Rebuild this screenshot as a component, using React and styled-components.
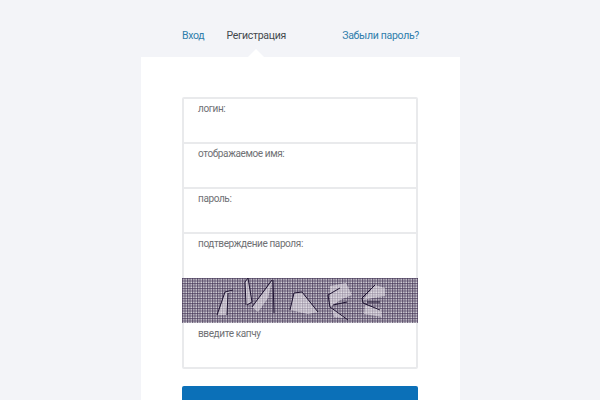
import React from 'react';
import styled, { createGlobalStyle } from 'styled-components';

const GlobalStyle = createGlobalStyle`
  html, body {
    margin: 0;
    height: 400px;
    overflow: hidden;
    background: #f3f4f8;
    font-family: Roboto, "Open Sans", sans-serif;
  }
`;

const Page = styled.div`
  width: 320px;
  margin: 0 0 0 141px;
  display: flex;
  flex-flow: column nowrap;
`;

const Nav = styled.nav`
  display: flex;
  align-items: flex-end;
  height: 57px;
  padding: 0 42px 14px 41px;
  box-sizing: border-box;
  font-size: 10.5px;
  letter-spacing: -0.3px;
  line-height: 14px;
`;

const Tab = styled.a`
  position: relative;
  display: block;
  margin-right: 22px;
  color: ${p => (p.$active ? '#43484d' : '#2f7dab')};

  ${p =>
    p.$active &&
    `&::after {
      content: '';
      position: absolute;
      left: 22px;
      top: 20px;
      border: 8px solid transparent;
      border-top: 0;
      border-bottom-color: #fff;
    }`}
`;

const ForgotLink = styled.a`
  margin-left: auto;
  color: #2f7dab;
`;

const Card = styled.div`
  background: #fff;
  padding: 40px 42px 0 41px;
  width: 319px;
  height: 343px;
  box-sizing: border-box;
  overflow: hidden;
`;

const Form = styled.form`
  display: flex;
  flex-flow: column nowrap;
`;

const Fields = styled.div`
  border: 2px solid #e9eaec;
  border-radius: 2px;
  display: flex;
  flex-flow: column nowrap;
  height: 272px;
  box-sizing: border-box;
`;

const Field = styled.div`
  height: ${p => (p.$short ? 44 : 45)}px;
  flex: none;
  box-sizing: border-box;
  padding: 3px 0 0 14px;
  font-size: 10px;
  letter-spacing: -0.38px;
  line-height: 14px;
  color: #6f7174;
  border-bottom: ${p => (p.$short ? 'none' : '2px solid #e9eaec')};
`;

const CaptchaImage = styled.svg`
  display: block;
  flex: none;
  width: 236px;
  height: 45px;
  margin: 0 -2px;
`;

const CaptchaField = styled(Field)`
  padding-top: 4px;
`;

const Submit = styled.button`
  margin-top: 17px;
  height: 40px;
  flex: none;
  border: 0;
  border-radius: 2px;
  background: #0b70b8;
`;

const Captcha = () => (
  <CaptchaImage viewBox="0 0 236 45">
    <defs>
      <pattern id="grid" width="2.5" height="2.5" patternUnits="userSpaceOnUse">
        <rect width="2.5" height="2.5" fill="#d6d3da" />
        <path d="M0 .6H2.5M.6 0V2.5" stroke="#3f3252" strokeWidth=".75" fill="none" />
      </pattern>
      <pattern id="gridLight" width="2.5" height="2.5" patternUnits="userSpaceOnUse">
        <rect width="2.5" height="2.5" fill="#e4e2e8" />
        <path d="M0 .6H2.5M.6 0V2.5" stroke="#85798f" strokeWidth=".55" fill="none" />
      </pattern>
    </defs>
    <rect width="236" height="45" fill="url(#grid)" />
    <g fill="url(#gridLight)">
      <path d="M36 37l7-23 8-2-5 3-1 22z" />
      <path d="M64 27l-1-23 3-4 4 24zM70 29L90 3l-4 17-10 14z" />
      <path d="M108 32l4-17 8-1 16 20-10 2z" />
      <path d="M148 8l16-3 6 12-10 4-12 8zM150 30l14 10-12-1z" />
      <path d="M193 7l10 3 0 8-12 2-10 2zM183 27l16 4 1 8-18-3z" />
    </g>
    <g fill="none" stroke="#1d1230" strokeWidth="1">
      <path d="M35 37l8-23 8-2M46 15l-1 22" />
      <path d="M64 27L63 4l3-4 4 24-5 3M70 29L90 2M91 2l1 33" />
      <path d="M108 32l4-17 8-1 16 20" />
      <path d="M158 10l-12 7 2 12 18 13M151 27l14-3" />
      <path d="M193 7l-13 13 1 5 17 7M185 24h13" />
    </g>
  </CaptchaImage>
);

export default function App() {
  return (
    <Page>
      <GlobalStyle />
      <Nav>
        <Tab>Вход</Tab>
        <Tab $active>Регистрация</Tab>
        <ForgotLink>Забыли пароль?</ForgotLink>
      </Nav>
      <Card>
        <Form>
          <Fields>
            <Field>логин:</Field>
            <Field>отображаемое имя:</Field>
            <Field>пароль:</Field>
            <Field $short>подтверждение пароля:</Field>
            <Captcha />
            <CaptchaField $short>введите капчу</CaptchaField>
          </Fields>
          <Submit type="button" />
        </Form>
      </Card>
    </Page>
  );
}
